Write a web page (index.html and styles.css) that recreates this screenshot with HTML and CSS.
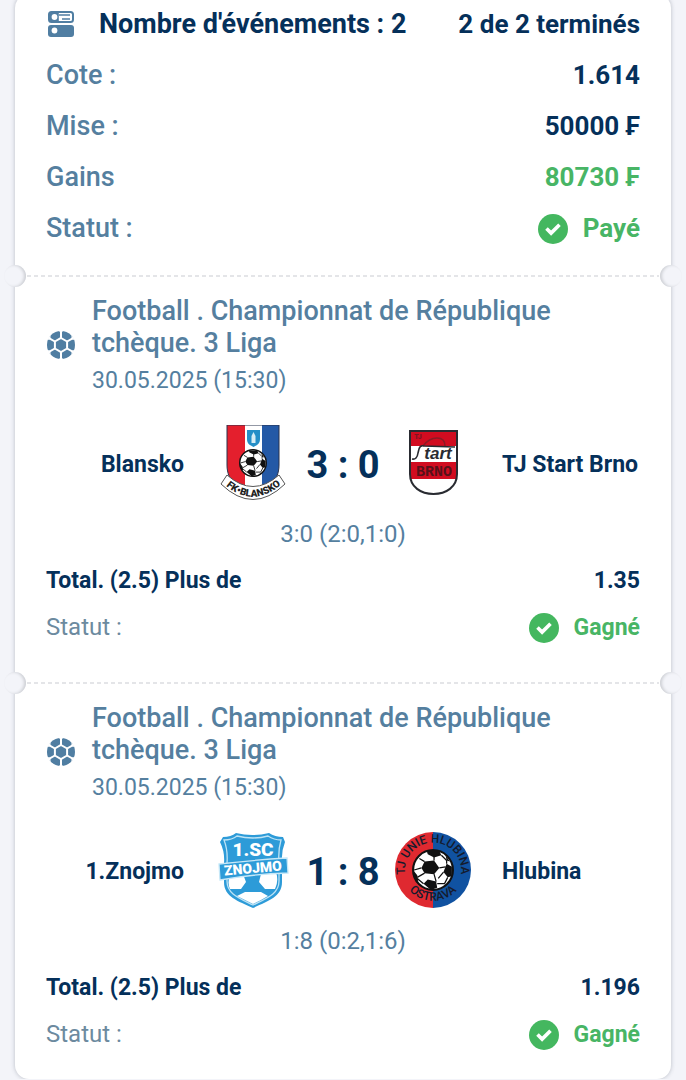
FILE: index.html
```html
<!DOCTYPE html>
<html lang="fr">
<head>
<meta charset="utf-8">
<meta name="viewport" content="width=device-width, initial-scale=1">
<title>Coupon</title>
<link rel="stylesheet" href="styles.css">
</head>
<body>
<svg class="defs" aria-hidden="true">
  <symbol id="check" viewBox="0 0 30 30">
    <circle cx="15" cy="15" r="15" fill="#44b75f"/>
    <path d="M8.500 14.500l4.600 4.600 8.400-8.400" fill="none" stroke="#fff" stroke-width="3.600"/>
  </symbol>
  <symbol id="football" viewBox="0 0 28 28">
    <circle cx="14" cy="14" r="14" fill="#507ea2"/>
    <path d="M14 7l6.1 3.5v7L14 21l-6.1-3.5v-7z" fill="none" stroke="#fff" stroke-width="2"/>
    <path d="M14 7V0M20.1 10.5L26.500 6.800M20.100 17.500L26.500 21.200M14 21v7M7.900 17.500L1.500 21.200M7.900 10.500L1.500 6.800" stroke="#fff" stroke-width="2"/>
    <path d="M11.500-.5h5L14 2zM11.500 28.500h5L14 26zM24.500 4l3 5-3-.8zM24.500 24l3-5-3 .8zM3.500 4l-3 5 3-.8zM3.500 24l-3-5 3 .8z" fill="#fff"/>
  </symbol>
  <symbol id="ball" viewBox="0 0 40 40">
    <circle cx="20" cy="20" r="19" fill="#fff" stroke="#111" stroke-width="2"/>
    <path d="M12 12l9-1 5 7-5 6-9-1-3-5zM14 2l12 0 2 4-7 2-6-3zM33 14l5 3v9l-4 1-4-5zM11 33l4-4 8 2 1 6-6 2zM1 20l4 5 1 6-4-3zM32 6l4 6-3-1z" fill="#111"/>
    <path d="M21 11v-4M12 12l-5-3M26 18l6-1M21 24l2 7M12 23l-7 4M28 6l5 5v3M30 22l-5 6M34 27l-3 6-7 0M9 18l-7 2M5 28l6 5" fill="none" stroke="#111" stroke-width="1.200"/>
  </symbol>
</svg>
<main class="coupon">
  <section class="summary">
    <header class="row heading">
      <svg class="events-icon" viewBox="0 0 26 26" aria-hidden="true">
        <rect x="1" y="1" width="24" height="10" rx="2.500" fill="#fff" stroke="#507ea2" stroke-width="2"/>
        <path d="M2 2h8v8H2zM11 4h11M14 8h8" fill="#507ea2" stroke="#507ea2" stroke-width="1.600"/>
        <circle cx="6.500" cy="6" r="2.900" fill="#fff"/>
        <rect y="14" width="26" height="12" rx="3" fill="#507ea2"/>
        <circle cx="6.500" cy="19.500" r="2.900" fill="#fff"/>
      </svg>
      <h1 class="count">Nombre d'événements : 2</h1>
      <span class="value">2 de 2 terminés</span>
    </header>
    <dl class="rows">
      <div class="row"><dt>Cote :</dt><dd class="value">1.614</dd></div>
      <div class="row"><dt>Mise :</dt><dd class="value">50000 ₣</dd></div>
      <div class="row"><dt>Gains</dt><dd class="value won">80730 ₣</dd></div>
      <div class="row"><dt>Statut :</dt><dd class="value won status"><svg class="check" aria-hidden="true"><use href="#check"/></svg>Payé</dd></div>
    </dl>
  </section>

  <article class="event">
    <header class="league">
      <svg class="sport" aria-hidden="true"><use href="#football"/></svg>
      <div>
        <h2 class="league-name">Football . Championnat de République tchèque. 3 Liga</h2>
        <time class="date" datetime="2025-05-30T15:30">30.05.2025 (15:30)</time>
      </div>
    </header>
    <div class="match">
      <span class="team home">Blansko</span>
      <svg class="crest" viewBox="0 0 76 76" role="img" aria-label="FK Blansko">
        <clipPath id="shield"><path d="M12 0h52v40c0 17-12 24-26 31C24 64 12 57 12 40z"/></clipPath>
        <g clip-path="url(#shield)">
          <path d="M12 0h18v76H12z" fill="#e41f2d"/>
          <path d="M30 0h17v76H30z" fill="#fff"/>
          <path d="M47 0h18v76H47z" fill="#2459a6"/>
        </g>
        <path d="M12 0h52v40c0 17-12 24-26 31C24 64 12 57 12 40z" fill="none" stroke="#29334c"/>
        <path d="M32 5h13v9c0 5-3 6-6.500 8C35 20 32 19 32 14z" fill="#258fc7"/>
        <path d="M38.500 7l2 4v7h-4v-7z" fill="#d7edf5"/>
        <use href="#ball" x="24" y="24" width="28" height="28"/>
        <path d="M12 50L6 59Q38 90 70 59l-6-9Q38 73 12 50z" fill="#fff" stroke="#555" stroke-width="1"/>
        <path id="blansko-arc" d="M10 60Q38 84 67 59" fill="none"/>
        <text class="crest-text blansko-text"><textPath href="#blansko-arc" startOffset="50%">FK•BLANSKO</textPath></text>
      </svg>
      <strong class="score">3 : 0</strong>
      <svg class="crest" viewBox="0 0 76 76" role="img" aria-label="Start Brno">
        <path d="M15 6h47v43c0 13-11 20-23.500 20S15 62 15 49z" fill="#fff"/>
        <path d="M15 6h47v15H15zM15 37h47v17H15z" fill="#d10c20"/>
        <path d="M15 6h47v43c0 13-11 20-23.500 20S15 62 15 49z" fill="none" stroke="#292b31" stroke-width="2"/>
        <path d="M28 21q6-8 14-8t8 8" fill="none" stroke="#8b1b25" stroke-width="1.500"/>
        <path d="M17 34q5 1 6-6l1-4q1-4 5-3l31 1" fill="none" stroke="#292b31" stroke-width="1.600"/>
        <text class="crest-text tj-text" x="23" y="14">TJ</text>
        <text class="crest-text start-text" x="43" y="34">tart</text>
        <text class="crest-text brno-text" x="39" y="51">BRNO</text>
      </svg>
      <span class="team">TJ Start Brno</span>
    </div>
    <p class="periods">3:0 (2:0,1:0)</p>
    <dl class="bet">
      <div class="row market"><dt>Total. (2.5) Plus de</dt><dd>1.35</dd></div>
      <div class="row"><dt class="bet-label">Statut :</dt><dd class="won status"><svg class="check" aria-hidden="true"><use href="#check"/></svg>Gagné</dd></div>
    </dl>
  </article>

  <article class="event">
    <header class="league">
      <svg class="sport" aria-hidden="true"><use href="#football"/></svg>
      <div>
        <h2 class="league-name">Football . Championnat de République tchèque. 3 Liga</h2>
        <time class="date" datetime="2025-05-30T15:30">30.05.2025 (15:30)</time>
      </div>
    </header>
    <div class="match">
      <span class="team home">1.Znojmo</span>
      <svg class="crest" viewBox="0 0 76 76" role="img" aria-label="1. SC Znojmo">
        <path d="M8 5q8 0 13-4 16 4 33 0 6 4 14 4l2 5q-4 10-3 21v19c0 15-14 19-29 26C23 69 9 65 9 50V31Q10 20 5 10z" fill="#2d9bd8"/>
        <path d="M9 8q8 0 13-4 16 4 31 0 6 4 13 4-3 10-2 23v18c0 13-12 17-26 24-14-7-26-11-26-24V31Q13 18 9 8z" fill="none" stroke="#bde3f5" stroke-width="1.300"/>
        <path d="M15 43l13-1 3 8-5 7H15q-3-6 0-14zM46 42l15-2q3 9-1 17H50l-6-7zM22 64l8-4h16l7 4-7 4-8 4-8-4z" fill="#fff"/>
        <path d="M4 32q35-4 68-6l1 15q-35 1-68 7z" fill="#2d9bd8" stroke="#c6e8f8" stroke-width="1.300"/>
        <text class="crest-text sc-text" x="38" y="24">1.SC</text>
        <text class="crest-text znojmo-text" x="38" y="41" transform="rotate(-5 38 37)">ZNOJMO</text>
      </svg>
      <strong class="score">1 : 8</strong>
      <svg class="crest" viewBox="0 0 76 76" role="img" aria-label="TJ Unie Hlubina Ostrava">
        <path d="M38 0a38 38 0 0 0 0 76z" fill="#df2930"/>
        <path d="M38 0a38 38 0 0 1 0 76z" fill="#1052a1"/>
        <use href="#ball" x="17" y="17" width="42" height="42"/>
        <path id="unie-arc" d="M12 49A28 28 0 1 1 64 49" fill="none"/>
        <path id="ostrava-arc" d="M7 47A33 33 0 0 0 69 47" fill="none"/>
        <text class="crest-text unie-text"><textPath href="#unie-arc" startOffset="50%">TJ UNIE HLUBINA</textPath></text>
        <text class="crest-text unie-text"><textPath href="#ostrava-arc" startOffset="50%">OSTRAVA</textPath></text>
      </svg>
      <span class="team">Hlubina</span>
    </div>
    <p class="periods">1:8 (0:2,1:6)</p>
    <dl class="bet">
      <div class="row market"><dt>Total. (2.5) Plus de</dt><dd>1.196</dd></div>
      <div class="row"><dt class="bet-label">Statut :</dt><dd class="won status"><svg class="check" aria-hidden="true"><use href="#check"/></svg>Gagné</dd></div>
    </dl>
  </article>
</main>
</body>
</html>
```

FILE: styles.css
```css
* { box-sizing: border-box; }

body {
  margin: 0;
  padding: 0 15px;
  background: #f3f4f9;
  color: #05305a;
  font-family: Roboto, "Noto Sans", sans-serif;
  overflow-x: hidden;
}

h1, h2, p, dl, dd { margin: 0; }

.defs { position: absolute; width: 0; height: 0; }

.coupon {
  margin-top: -6px;
  background: #fff;
  border-radius: 14px;
  box-shadow: 0 0 4px rgba(50, 60, 80, 0.3);
}

.summary {
  padding: 4px 31px 21px;
  font-size: 27px;
  font-weight: 500;
  line-height: 51px;
}

.row {
  display: flex;
  align-items: center;
  justify-content: space-between;
}

.heading { line-height: 52px; }

.rows { color: #557f9f; }

.events-icon { width: 26px; height: 26px; margin: 0 25px 0 2px; }

.count { flex: 1; font-size: 27px; font-weight: 700; }

.value { color: #05305a; font-size: 26px; font-weight: 700; }

.won { color: #48b565; }

.status { display: flex; align-items: center; gap: 15px; }

.check { width: 30px; height: 30px; }

.event {
  position: relative;
  padding: 20px 31px 31px;
  background: repeating-linear-gradient(90deg, #e4e5e8 0 4px, transparent 4px 7px) 12px 0 / calc(100% - 24px) 2px no-repeat;
}

.event:last-child { padding-bottom: 21px; }

.event::before,
.event::after {
  content: "";
  position: absolute;
  top: -10px;
  width: 22px;
  height: 22px;
  border-radius: 50%;
  background: #f3f4f9;
}

.event::before { left: -11px; box-shadow: inset -2px 0 3px #ced0d5; }

.event::after { right: -11px; box-shadow: inset 2px 0 3px #ced0d5; }

.league { display: flex; align-items: center; gap: 17px; color: #557f9f; }

.sport { flex: none; width: 28px; height: 28px; margin: 0 0 8px 1px; }

.league-name { font-size: 27px; font-weight: 500; line-height: 32px; }

.date { display: block; font-size: 23px; line-height: 44px; }

.match {
  display: grid;
  grid-template-columns: 1fr 76px 104px 76px 1fr;
  align-items: center;
  margin-top: 22px;
}

.team { padding-left: 31px; font-size: 23px; font-weight: 700; line-height: 28px; white-space: nowrap; }

.home { padding: 0 31px 0 0; text-align: right; }

.crest { width: 76px; height: 76px; margin-bottom: 4px; }

.score { font-size: 38px; line-height: 48px; text-align: center; }

.periods { margin-top: 13px; color: #557f9f; font-size: 24px; line-height: 32px; text-align: center; }

.bet { padding-top: 7px; font-size: 23px; font-weight: 700; line-height: 47px; }

.bet-label { color: #6c8a9f; font-size: 24px; font-weight: 400; }

.crest-text { font-family: Roboto, sans-serif; font-weight: 900; text-anchor: middle; }

.blansko-text { fill: #222; font-size: 10px; }
.tj-text { fill: #7d1420; font-size: 7px; }
.start-text { fill: #292b31; font-family: "Liberation Sans", sans-serif; font-size: 17px; font-style: italic; font-weight: 700; }
.brno-text { fill: #571019; font-family: "Liberation Mono", monospace; font-size: 15px; }
.sc-text { fill: #fff; font-size: 19px; }
.znojmo-text { fill: #fff; font-size: 14px; }
.unie-text { fill: #151b2d; font-size: 12px; font-weight: 500; }
```
